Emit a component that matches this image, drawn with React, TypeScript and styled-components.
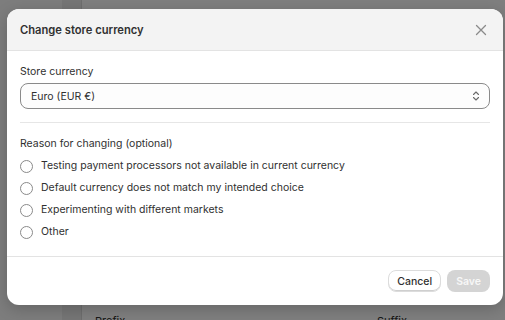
import React from "react";
import styled, { createGlobalStyle } from "styled-components";

const Global = createGlobalStyle`
  html, body { margin: 0; padding: 0; }
  body {
    width: 505px;
    height: 320px;
    overflow: hidden;
    font-family: Inter, "Noto Sans", "Liberation Sans", sans-serif;
    color: #303030;
    background: #ffffff;
  }
  * { box-sizing: border-box; }
`;

const Page = styled.div`
  position: relative;
  width: 505px;
  height: 320px;
  overflow: hidden;
  display: flex;
`;

const Rail = styled.div`
  width: 62px;
  background: #fbfbfb;
`;

const Nav = styled.div`
  width: 20px;
  background: #ececec;
  border-right: 1px solid #dcdcdc;
`;

const Main = styled.div`
  flex: 1;
  padding: 314px 0 0 13px;
  display: flex;
  font-size: 11px;
  line-height: 14px;
`;

const FieldName = styled.span<{ $w: number }>`
  width: ${(p) => p.$w}px;
  color: #303030;
`;

const Backdrop = styled.div`
  position: absolute;
  inset: 0;
  background: rgba(0, 0, 0, 0.5);
`;

const Modal = styled.div`
  position: absolute;
  left: 7px;
  top: 9px;
  width: 496px;
  height: 296px;
  background: #ffffff;
  border-radius: 12px;
  overflow: hidden;
  display: flex;
  flex-direction: column;
  box-shadow: 0 4px 16px rgba(0, 0, 0, 0.2);
`;

const Header = styled.div`
  height: 42px;
  flex: none;
  display: flex;
  align-items: center;
  justify-content: space-between;
  padding: 0 14px 0 13px;
  background: #f3f3f3;
  border-bottom: 1px solid #e3e3e3;
`;

const Title = styled.h2`
  margin: 0;
  font-size: 11.2px;
  font-weight: 600;
  color: #303030;
  line-height: 16px;
`;

const CloseButton = styled.button`
  border: 0;
  background: transparent;
  padding: 0;
  width: 16px;
  height: 16px;
  display: flex;
  align-items: center;
  justify-content: center;
  color: #8a8a8a;
`;

const Body = styled.div`
  flex: 1;
  padding: 13px 13px 0 13px;
  display: flex;
  flex-direction: column;
`;

const Label = styled.div`
  font-size: 10.5px;
  line-height: 16px;
  color: #303030;
`;

const Select = styled.div`
  margin-top: 3px;
  height: 26px;
  border: 1px solid #8a8a8a;
  border-radius: 8px;
  display: flex;
  align-items: center;
  justify-content: space-between;
  padding: 0 8px 0 10px;
  font-size: 10.5px;
  color: #303030;
  background: #fdfdfd;
`;

const Divider = styled.hr`
  margin: 13px 0 0;
  border: 0;
  border-top: 1px solid #e6e6e6;
`;

const Section = styled.div`
  margin-top: 13px;
  display: flex;
  flex-direction: column;
`;

const Options = styled.div`
  margin-top: 6px;
  display: flex;
  flex-direction: column;
  gap: 6px;
`;

const Option = styled.label`
  display: flex;
  align-items: center;
  gap: 8px;
  font-size: 10.5px;
  line-height: 16px;
  color: #303030;
`;

const Radio = styled.span`
  width: 13px;
  height: 13px;
  border-radius: 50%;
  border: 1px solid #8a8a8a;
  background: #fff;
  flex: none;
`;

const Footer = styled.div`
  height: 49px;
  flex: none;
  border-top: 1px solid #e3e3e3;
  display: flex;
  align-items: center;
  justify-content: flex-end;
  gap: 6px;
  padding: 0 13px;
`;

const Button = styled.button<{ $primary?: boolean }>`
  height: 22px;
  border-radius: 8px;
  font-family: inherit;
  font-size: 10.5px;
  font-weight: ${(p) => (p.$primary ? 600 : 500)};
  padding: 0 ${(p) => (p.$primary ? 9 : 8)}px;
  border: ${(p) => (p.$primary ? "0" : "1px solid #dcdcdc")};
  background: ${(p) => (p.$primary ? "#d4d4d4" : "#ffffff")};
  color: ${(p) => (p.$primary ? "#f7f7f7" : "#303030")};
  box-shadow: ${(p) => (p.$primary ? "none" : "inset 0 -1px 0 #cfcfcf")};
`;

const options = [
  "Testing payment processors not available in current currency",
  "Default currency does not match my intended choice",
  "Experimenting with different markets",
  "Other",
];

export default function App() {
  return (
    <>
      <Global />
      <Page>
        <Rail />
        <Nav />
        <Main>
          <FieldName $w={282}>Prefix</FieldName>
          <FieldName $w={100}>Suffix</FieldName>
        </Main>
        <Backdrop />
        <Modal role="dialog">
          <Header>
            <Title>Change store currency</Title>
            <CloseButton aria-label="Close">
              <svg width="12" height="12" viewBox="0 0 12 12" fill="none">
                <path
                  d="M1.5 1.5l9 9M10.5 1.5l-9 9"
                  stroke="currentColor"
                  strokeWidth="1.3"
                  strokeLinecap="round"
                />
              </svg>
            </CloseButton>
          </Header>
          <Body>
            <Label>Store currency</Label>
            <Select>
              <span>Euro (EUR €)</span>
              <svg width="10" height="12" viewBox="0 0 10 12" fill="none">
                <path
                  d="M2.5 4.5L5 2l2.5 2.5M2.5 7.5L5 10l2.5-2.5"
                  stroke="#6b6b6b"
                  strokeWidth="1.1"
                  strokeLinecap="round"
                  strokeLinejoin="round"
                />
              </svg>
            </Select>
            <Divider />
            <Section>
              <Label>Reason for changing (optional)</Label>
              <Options>
                {options.map((o) => (
                  <Option key={o}>
                    <Radio />
                    {o}
                  </Option>
                ))}
              </Options>
            </Section>
          </Body>
          <Footer>
            <Button>Cancel</Button>
            <Button $primary disabled>
              Save
            </Button>
          </Footer>
        </Modal>
      </Page>
    </>
  );
}
